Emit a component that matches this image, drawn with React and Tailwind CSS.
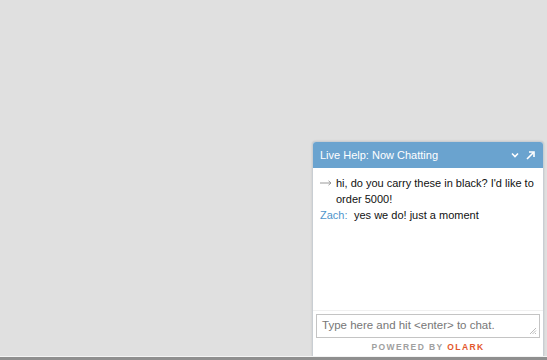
const messages = [
  { from: null, text: "hi, do you carry these in black? I'd like to order 5000!" },
  { from: "Zach", text: "yes we do! just a moment" },
];

const ChatWindow = () => {
  return (
    <div className="w-[232px] h-[215px] mr-[3px] flex flex-col rounded-t-[4px] border border-b-0 border-[#c9ced3] bg-white shadow-[0_0_2px_rgba(0,0,0,0.15)]">
      <div className="h-[26px] shrink-0 flex items-center justify-between pl-[7px] pr-[8px] bg-[#6aa3cf] rounded-t-[3px] text-white text-[11px]">
        <span>Live Help: Now Chatting</span>
        <div className="flex items-center gap-[7px]">
          <svg width="8" height="6" viewBox="0 0 8 6" fill="none" stroke="white" strokeWidth="1.6">
            <path d="M1 1.5 L4 4.5 L7 1.5" />
          </svg>
          <svg width="9" height="9" viewBox="0 0 9 9" fill="none" stroke="white" strokeWidth="1.6">
            <path d="M1 8 L7.5 1.5" />
            <path d="M3 1 H8 V6" />
          </svg>
        </div>
      </div>

      <div className="flex-1 pt-[7px] pl-[7px] pr-[4px] text-[11px] leading-[16px] text-[#111]">
        {messages.map((m, i) =>
          m.from ? (
            <div key={i} className="flex">
              <span className="text-[#4f95cc] w-[34px] shrink-0">{m.from}:</span>
              <span>{m.text}</span>
            </div>
          ) : (
            <div key={i} className="flex">
              <span className="w-[16px] shrink-0 flex items-center h-[16px]">
                <svg width="12" height="6" viewBox="0 0 12 6" fill="none" stroke="#9a9a9a" strokeWidth="1">
                  <path d="M0 3 H11 M8.5 0.8 L11 3 L8.5 5.2" />
                </svg>
              </span>
              <span>{m.text}</span>
            </div>
          )
        )}
      </div>

      <div className="border-t border-[#f0f0f0] px-[3px] pt-[3px]">
        <div className="relative h-[24px] border border-[#c4c4c4] bg-white flex items-center pl-[5px] text-[11.5px] text-[#777]">
          Type here and hit &lt;enter&gt; to chat.
          <svg className="absolute right-[2px] bottom-[2px]" width="8" height="8" viewBox="0 0 8 8" stroke="#aaa" strokeWidth="0.8">
            <path d="M1 7 L7 1 M3.5 7 L7 3.5 M6 7 L7 6" />
          </svg>
        </div>
      </div>
      <div className="h-[18px] flex items-center justify-center text-[8.5px] font-bold tracking-[1.4px] text-[#a0a0a0]">
        POWERED BY&nbsp;<span className="text-[#e3572c]">OLARK</span>
      </div>
    </div>
  );
};

export default function App() {
  return (
    <div
      className="h-[360px] w-full flex flex-col bg-[#e0e0e0]"
      style={{ fontFamily: '"Liberation Sans", Arial, sans-serif' }}
    >
      <div className="flex-1 flex items-end justify-end">
        <ChatWindow />
      </div>
      <div className="h-[4px] border-t border-[#f4f4f4] bg-[#8f8f8f]" />
    </div>
  );
}
